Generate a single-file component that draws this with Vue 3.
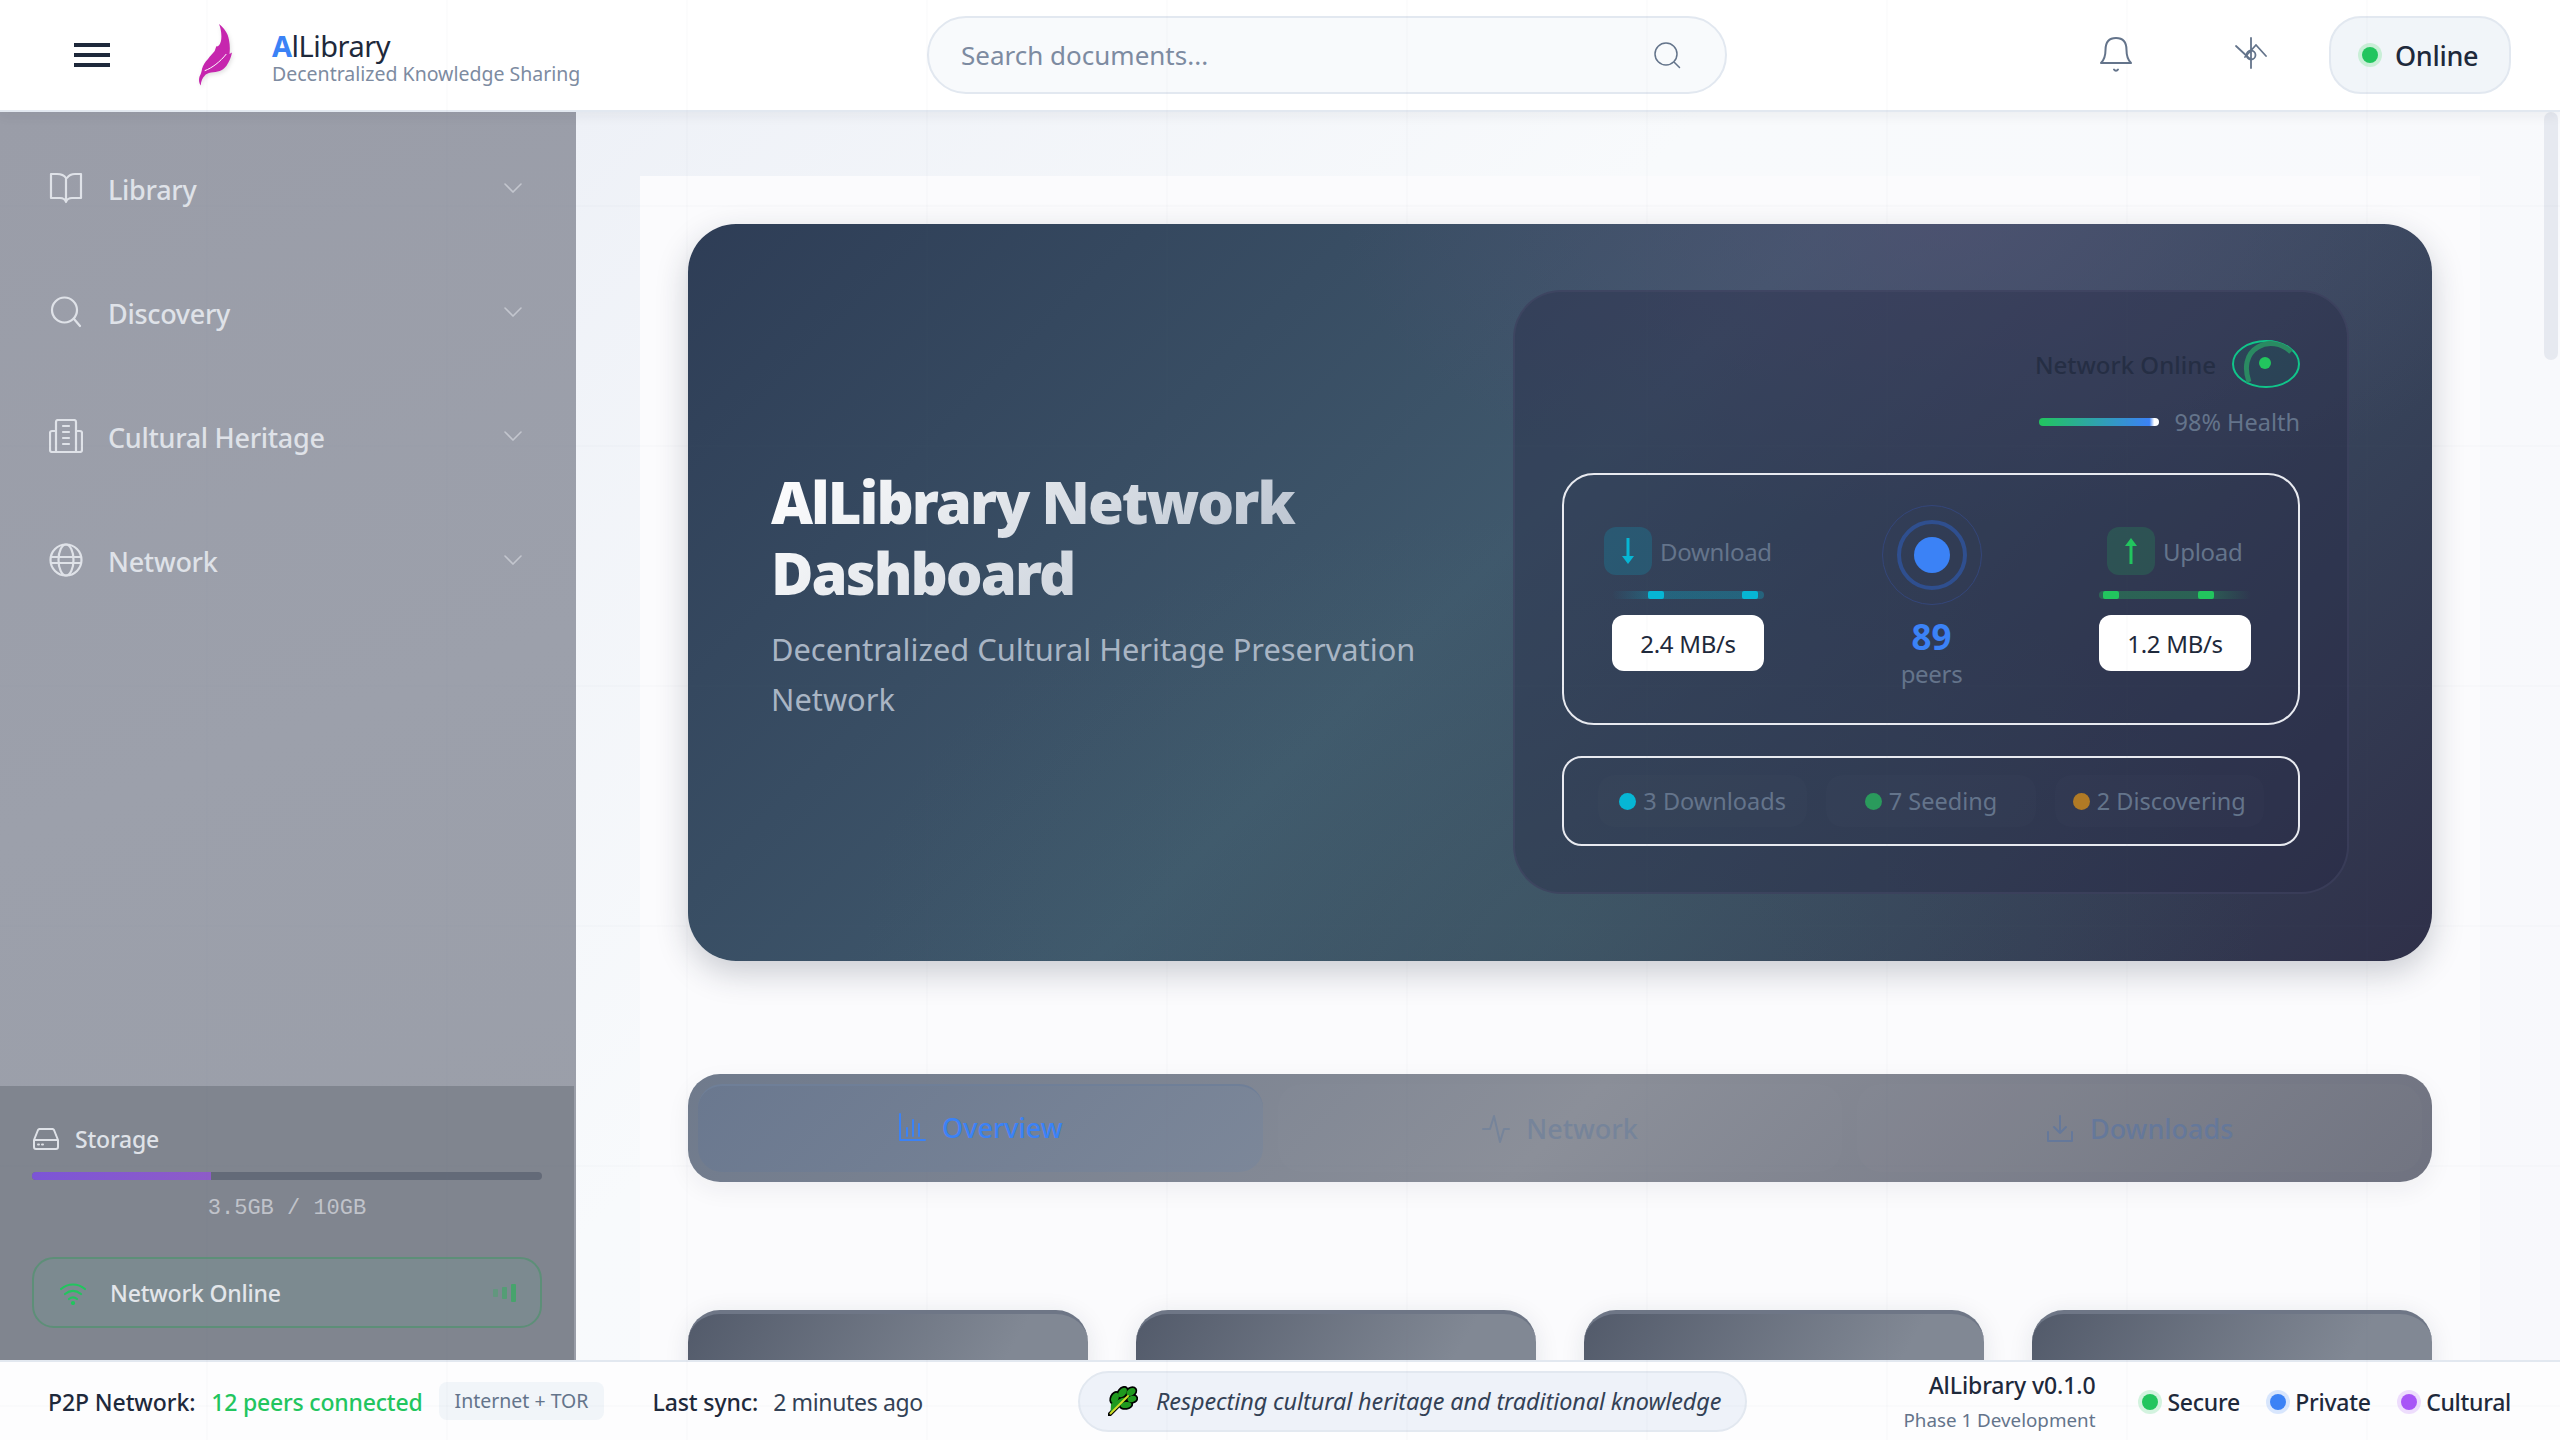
<script setup>
const navItems = [
  { label: 'Library', icon: 'book' },
  { label: 'Discovery', icon: 'search' },
  { label: 'Cultural Heritage', icon: 'building' },
  { label: 'Network', icon: 'globe' },
]
const tabs = [
  { label: 'Overview', icon: 'chart', cls: 'active' },
  { label: 'Network', icon: 'pulse', cls: 'net' },
  { label: 'Downloads', icon: 'download', cls: 'dls' },
]
const statuses = [
  { label: '3 Downloads', color: '#06b6d4' },
  { label: '7 Seeding', color: '#2a9a5c' },
  { label: '2 Discovering', color: '#b07a25' },
]
const badges = [
  { label: 'Secure', color: '#22c55e', halo: '#d3f3df' },
  { label: 'Private', color: '#3b82f6', halo: '#d8e6fd' },
  { label: 'Cultural', color: '#a855f7', halo: '#eeddfd' },
]
</script>

<template>
  <div class="app">
    <header class="header">
      <button class="burger"><span></span><span></span><span></span></button>
      <svg class="feather" viewBox="0 0 34 62" width="34" height="62">
        <path fill="#c626ae" d="M20 0 C25 4 29 9 30 16 C31 21 31 25 30.500 30 L33 28.500 C32 34 30 38 27.500 41.700 C25 45 23 46 20.700 47 C18 48 15 48 12 48.500 C9 49 7 50 5.700 51.700 C3.500 54 2 57 1.700 61.500 C0 59 -0.300 56 0.300 53.500 C1 51 2.300 50 3 45 C4 41 6 38 9 35 C11 32 14 29 15.700 27 L17.300 22.300 C19 23 21 21 22 17 C23 11 22 5 20 0 Z"/>
        <path fill="none" stroke="#fff" stroke-width="1" d="M5.700 46.700 C13 44 21 38 27.300 30"/>
      </svg>
      <div class="brand">
        <div class="brand-name"><b>A</b>lLibrary</div>
        <div class="brand-sub">Decentralized Knowledge Sharing</div>
      </div>
      <div class="search">
        <span class="search-text">Search documents...</span>
        <svg viewBox="0 0 30 30" width="30" height="30" fill="none" stroke="#64748b" stroke-width="1.500" stroke-linecap="round"><circle cx="14" cy="14" r="11"/><path d="M22.500 22.500l5 5"/></svg>
      </div>
      <div class="header-right">
        <svg class="bell" viewBox="0 0 34 38" width="34" height="38" fill="none" stroke="#64748b" stroke-width="2" stroke-linecap="round" stroke-linejoin="round">
          <path d="M2 27 C5 24 6.500 20 6.500 14 C6.500 6 10.500 2 17 2 C23.500 2 27.500 6 27.500 14 C27.500 20 29 24 32 27 Z"/>
          <path d="M15 33.500 C16 35 18 35 19 33.500"/>
        </svg>
        <svg class="odd" viewBox="0 0 32 32" width="32" height="32" fill="none" stroke="#64748b" stroke-width="1.800" stroke-linecap="round">
          <path d="M16 1v30M1 9l14 13M10 20L21 8l10 11"/>
          <circle cx="16" cy="18" r="4.500"/>
        </svg>
        <div class="online-pill"><i class="online-dot"></i><span>Online</span></div>
      </div>
    </header>

    <div class="middle">
      <aside class="sidebar">
        <nav class="nav">
          <div v-for="item in navItems" :key="item.label" class="nav-item">
            <svg class="nav-icon" viewBox="0 0 34 34" width="34" height="34" fill="none" stroke="#dfe2e8" stroke-width="2.200" stroke-linecap="round" stroke-linejoin="round">
              <template v-if="item.icon === 'book'">
                <path d="M17 7C15 4 12 3 8 3H2v24h9c3 0 5 1 6 4 1-3 3-4 6-4h9V3h-6c-4 0-6 1-8 4zM17 7v24"/>
              </template>
              <template v-else-if="item.icon === 'search'">
                <circle cx="15.500" cy="15" r="12.500"/><path d="M25 24l6 7"/>
              </template>
              <template v-else-if="item.icon === 'building'">
                <path d="M7 33V3a2 2 0 0 1 2-2h16a2 2 0 0 1 2 2v30zM7 12H3a2 2 0 0 0-2 2v17a2 2 0 0 0 2 2h28a2 2 0 0 0 2-2V14a2 2 0 0 0-2-2h-4M14 7h6M14 13h6M14 19h6M14 25h6"/>
              </template>
              <template v-else>
                <circle cx="17" cy="17" r="15.500"/><ellipse cx="17" cy="17" rx="7.500" ry="15.500"/><path d="M2 14h30M2 20h30"/>
              </template>
            </svg>
            <span class="nav-label">{{ item.label }}</span>
            <svg class="chev" viewBox="0 0 18 10" width="18" height="10" fill="none" stroke="#c3c6ce" stroke-width="1.600" stroke-linecap="round"><path d="M1 1l8 8 8-8"/></svg>
          </div>
        </nav>
        <div class="side-foot">
          <div class="storage-head">
            <svg viewBox="0 0 26 22" width="26" height="22" fill="none" stroke="#dfe2e8" stroke-width="2" stroke-linejoin="round"><path d="M1 12L5 2a2 2 0 0 1 2-1h12a2 2 0 0 1 2 1l4 10v7a2 2 0 0 1-2 2H3a2 2 0 0 1-2-2zM1 12h24"/><path d="M5 16.500h1M9 16.500h1" stroke-linecap="round"/></svg>
            <span>Storage</span>
          </div>
          <div class="storage-bar"><div class="storage-fill"></div></div>
          <div class="storage-text">3.5GB / 10GB</div>
          <div class="net-box">
            <svg viewBox="0 0 26 24" width="26" height="24" fill="none" stroke="#22c55e" stroke-width="2.200" stroke-linecap="round"><path d="M1 8c7-6 17-6 24 0M5 13c5-4 11-4 16 0M9 18c2.500-2 5.500-2 8 0"/><circle cx="13" cy="22" r="1" fill="#22c55e"/></svg>
            <span class="net-label">Network Online</span>
            <div class="net-bars"><i class="b1"></i><i class="b2"></i><i class="b3"></i></div>
          </div>
        </div>
      </aside>

      <main class="main">
        <div class="scroll-thumb"></div>
        <div class="sheet">
          <section class="hero">
            <div class="hero-text">
              <h1>AlLibrary Network Dashboard</h1>
              <p>Decentralized Cultural Heritage Preservation Network</p>
            </div>
            <div class="panel">
              <div class="health-head">
                <span class="health-name">Network Online</span>
                <svg class="ring" viewBox="0 0 68 48" width="68" height="48">
                  <ellipse cx="34" cy="24" rx="33" ry="23" fill="rgba(20,100,95,.22)" stroke="#10c58a" stroke-width="2"/>
                  <path d="M17 42C12 28 14 14 26 7C36 1 50 3 59 12" fill="none" stroke="#2a8a62" stroke-width="5"/>
                  <circle cx="33" cy="23" r="6" fill="#22c55e"/>
                </svg>
              </div>
              <div class="health-row">
                <div class="health-bar"></div>
                <span>98% Health</span>
              </div>
              <div class="speed-box">
                <div class="speed dl">
                  <div class="speed-head">
                    <div class="speed-icon"><svg viewBox="0 0 12 28" width="12" height="28"><path fill="#06b6d4" d="M4.500 1h3v18H12l-6 8-6-8h4.500z"/></svg></div>
                    <span>Download</span>
                  </div>
                  <div class="speed-track"><i class="s1"></i><i class="s2"></i></div>
                  <div class="speed-val">2.4 MB/s</div>
                </div>
                <div class="peers">
                  <div class="radar"><i class="r3"></i><i class="r2"></i><i class="r1"></i></div>
                  <div class="peer-num">89</div>
                  <div class="peer-label">peers</div>
                </div>
                <div class="speed ul">
                  <div class="speed-head">
                    <div class="speed-icon"><svg viewBox="0 0 12 28" width="12" height="28"><path fill="#22c55e" d="M4.500 27h3V9H12L6 1 0 9h4.500z"/></svg></div>
                    <span>Upload</span>
                  </div>
                  <div class="speed-track"><i class="s1"></i><i class="s2"></i></div>
                  <div class="speed-val">1.2 MB/s</div>
                </div>
              </div>
              <div class="status-box">
                <div v-for="s in statuses" :key="s.label" class="status-item">
                  <i :style="{ background: s.color }"></i><span>{{ s.label }}</span>
                </div>
              </div>
            </div>
          </section>

          <div class="tabs">
            <div v-for="t in tabs" :key="t.label" class="tab" :class="t.cls">
              <svg viewBox="0 0 28 30" width="28" height="30" fill="none" stroke="currentColor" stroke-width="2" stroke-linecap="round" stroke-linejoin="round">
                <path v-if="t.icon === 'chart'" d="M2 2v26h25M9 24v-8M15 24V8M21 24v-12"/>
                <path v-else-if="t.icon === 'pulse'" d="M1 15h7l4-13 6 26 4-13h5"/>
                <path v-else d="M14 2v17M8 13l6 6 6-6M2 18v9h24v-9"/>
              </svg>
              <span>{{ t.label }}</span>
            </div>
          </div>

          <div class="cards">
            <div v-for="n in 4" :key="n" class="card"></div>
          </div>
        </div>
      </main>
    </div>

    <footer class="footer">
      <div class="foot-left">
        <b>P2P Network:</b>
        <span class="peers-ok">12 peers connected</span>
        <span class="chip">Internet + TOR</span>
        <b class="sync">Last sync:</b>
        <span class="ago">2 minutes ago</span>
      </div>
      <div class="quote">
        <svg viewBox="0 0 30 30" width="30" height="30">
          <g stroke="#000" stroke-width="3.500" fill="#000" stroke-linecap="round">
            <ellipse cx="23" cy="6" rx="5" ry="3.500" transform="rotate(-35 23 6)"/>
            <ellipse cx="14.500" cy="6.500" rx="5.500" ry="3.500" transform="rotate(-50 14.500 6.500)"/>
            <ellipse cx="7" cy="12" rx="5.500" ry="3.500" transform="rotate(-65 7 12)"/>
            <ellipse cx="24" cy="13" rx="4.500" ry="3" transform="rotate(-15 24 13)"/>
            <ellipse cx="18" cy="19" rx="5.500" ry="3" transform="rotate(-10 18 19)"/>
            <path d="M1.500 28.500L22 8" stroke-width="4"/>
          </g>
          <g fill="#1f9a1f">
            <ellipse cx="23" cy="6" rx="5" ry="3.500" transform="rotate(-35 23 6)"/>
            <ellipse cx="14.500" cy="6.500" rx="5.500" ry="3.500" transform="rotate(-50 14.500 6.500)"/>
            <ellipse cx="7" cy="12" rx="5.500" ry="3.500" transform="rotate(-65 7 12)"/>
            <ellipse cx="24" cy="13" rx="4.500" ry="3" transform="rotate(-15 24 13)"/>
            <ellipse cx="18" cy="19" rx="5.500" ry="3" transform="rotate(-10 18 19)"/>
          </g>
          <path d="M3 18L6 16 14 12 20 11 12 20 7 24 2.500 27z" fill="#1f9a1f"/>
          <path d="M2.500 27.500L20 10" fill="none" stroke="#cfdc2a" stroke-width="2" stroke-linecap="round"/>
        </svg>
        <em>Respecting cultural heritage and traditional knowledge</em>
      </div>
      <div class="foot-right">
        <div class="version">
          <b>AlLibrary v0.1.0</b>
          <span>Phase 1 Development</span>
        </div>
        <div v-for="b in badges" :key="b.label" class="badge">
          <i :style="{ background: b.color, boxShadow: '0 0 0 4px ' + b.halo }"></i>
          <span>{{ b.label }}</span>
        </div>
      </div>
    </footer>
  </div>
</template>

<style>
html, body { margin: 0; background: #f8fafc; }
</style>

<style scoped>
.app {
  width: 2560px;
  height: 1440px;
  display: flex;
  flex-direction: column;
  overflow: hidden;
  position: relative;
  font-family: "Noto Sans", "Open Sans", sans-serif;
  color: #1e293b;
}
.app::after {
  content: "";
  position: absolute;
  inset: 0;
  z-index: 5;
  pointer-events: none;
  background-image:
    linear-gradient(90deg, rgba(90, 105, 130, .02) 2px, transparent 2px),
    linear-gradient(rgba(90, 105, 130, .02) 2px, transparent 2px);
  background-size: 240px 240px;
  background-position: 206px 205px;
}
.header {
  height: 112px;
  box-sizing: border-box;
  flex: none;
  display: flex;
  align-items: center;
  background: #fff;
  border-bottom: 2px solid #e2e8f0;
  position: relative;
  z-index: 3;
  box-shadow: 0 4px 12px rgba(30, 41, 59, .06);
}
.burger {
  all: unset;
  margin-left: 74px;
  width: 36px;
  display: flex;
  flex-direction: column;
  gap: 5.500px;
}
.burger span { height: 4.500px; background: #1e293b; }
.feather { margin-left: 89px; filter: drop-shadow(1px 2px 2px rgba(0, 0, 0, .12)); }
.brand { margin-left: 39px; width: 655px; flex: none; padding-top: 6px; }
.brand-name { font-size: 29px; line-height: 30px; letter-spacing: -.5px; }
.brand-name b { color: #3b82f6; font-weight: 700; }
.brand-sub { font-size: 19.500px; line-height: 22px; color: #7d8ba1; margin-top: 2px; }
.search {
  width: 800px;
  height: 78px;
  box-sizing: border-box;
  flex: none;
  border: 2px solid #e2e8f0;
  background: #f8fafc;
  border-radius: 39px;
  display: flex;
  align-items: center;
  justify-content: space-between;
  padding: 0 43px 0 32px;
  font-size: 26px;
  color: #7d8ba1;
}
.header-right { flex: 1; display: flex; align-items: center; padding-right: 49px; min-width: 0; }
.bell { margin-left: 372px; }
.odd { margin-left: 102px; margin-bottom: 4px; }
.online-pill {
  margin-left: 62px;
  width: 182px;
  height: 78px;
  box-sizing: border-box;
  border: 2px solid #e2e8f0;
  background: #f1f5f9;
  border-radius: 32px;
  display: flex;
  align-items: center;
  gap: 17px;
  padding-left: 31px;
  font-size: 27px;
  letter-spacing: -.3px;
  font-weight: 500;
}
.online-dot { width: 16px; height: 16px; border-radius: 50%; background: #22c55e; box-shadow: 0 0 0 4px #c9efd7; flex: none; }

.middle { flex: 1; min-height: 0; display: flex; }
.sidebar {
  width: 576px;
  flex: none;
  display: flex;
  flex-direction: column;
  background: linear-gradient(160deg, #9a9da8, #9ca0ab 50%, #9a9ea8);
  color: #dfe2e8;
}
.nav { padding-top: 14px; flex: 1; }
.nav-item { height: 124px; display: flex; align-items: center; padding: 0 48px 0 49px; }
.nav-label { margin-left: 25px; flex: 1; font-size: 27px; letter-spacing: -.3px; font-weight: 500; padding-top: 2px; }
.chev { margin-right: 6px; }
.nav-icon { flex: none; }
.side-foot {
  height: 274px;
  box-sizing: border-box;
  flex: none;
  padding: 40px 32px 0;
  background: #80858f;
  border-right: 2px solid #9a9ea8;
}
.storage-head { display: flex; align-items: center; gap: 16px; font-size: 23px; letter-spacing: -.2px; font-weight: 500; height: 26px; padding-left: 1px; }
.storage-bar { margin-top: 20px; height: 8px; border-radius: 4px; background: #636a78; overflow: hidden; }
.storage-fill { width: 35%; height: 100%; background: linear-gradient(90deg, #7c55d6, #8e5cc8); }
.storage-text {
  margin-top: 16px;
  text-align: center;
  font-family: "Liberation Mono", monospace;
  font-size: 22px;
  line-height: 26px;
  color: #c0c3ca;
}
.net-box {
  margin-top: 35px;
  height: 71px;
  box-sizing: border-box;
  border: 2px solid #5d8f78;
  border-radius: 22px;
  background: #7c8a90;
  display: flex;
  align-items: center;
  padding: 0 24px 0 26px;
}
.net-label { margin-left: 24px; flex: 1; font-size: 23px; letter-spacing: -.2px; font-weight: 500; color: #e3e6ea; }
.net-bars { display: flex; align-items: center; gap: 4px; }
.net-bars i { width: 5px; background: #47a36c; border-radius: 1px; }
.b1 { height: 8px; opacity: .5; }
.b2 { height: 12px; opacity: .75; }
.b3 { height: 18px; }

.main {
  flex: 1;
  min-width: 0;
  position: relative;
  overflow: hidden;
  padding: 64px 80px 0 64px;
  background: linear-gradient(135deg, #eef1f7, #f8fafc 35%, #f8f8fc);
}
.scroll-thumb { position: absolute; right: 2px; top: 0; width: 14px; height: 248px; border-radius: 7px; background: #e6e9f0; }
.sheet { background: #fbfbfd; padding: 48px 48px 0; min-height: 100%; box-sizing: border-box; }
.hero {
  height: 737px;
  box-sizing: border-box;
  border-radius: 48px;
  padding: 66px 83px 67px;
  display: flex;
  justify-content: space-between;
  align-items: stretch;
  background:
    radial-gradient(ellipse 700px 420px at 50% 96%, rgba(72, 108, 112, .32), transparent),
    radial-gradient(ellipse 600px 300px at 72% 0%, rgba(84, 80, 116, .6), transparent),
    linear-gradient(135deg, #2e3d56, #3f586c 46%, #2f3049);
  box-shadow: 0 12px 32px rgba(30, 41, 59, .22);
}
.hero-text { width: 660px; display: flex; flex-direction: column; justify-content: center; padding-top: 6px; }
.hero-text h1 {
  margin: 0;
  font-size: 58px;
  line-height: 71px;
  font-weight: 900;
  letter-spacing: -2px;
  background: linear-gradient(135deg, #fff, #a6b2c2);
  -webkit-background-clip: text;
  background-clip: text;
  color: transparent;
}
.hero-text p { margin: 16px 0 0; font-size: 30.800px; line-height: 50px; color: #a9b5c4; }
.panel {
  width: 836px;
  box-sizing: border-box;
  flex: none;
  border-radius: 48px;
  padding: 48px 47px 0 47px;
  background: rgba(38, 40, 68, .42);
  border: 2px solid rgba(70, 74, 104, .5);
}
.health-head { display: flex; justify-content: flex-end; align-items: center; gap: 16px; height: 48px; }
.health-name { font-size: 24px; font-weight: 500; color: #252e44; }
.ring { flex: none; }
.health-row { display: flex; justify-content: flex-end; align-items: center; gap: 16px; margin-top: 16px; font-size: 23.500px; color: #64748b; height: 36px; }
.health-bar {
  width: 120px;
  height: 8px;
  border-radius: 4px;
  background: linear-gradient(90deg, #22c55e, #3b82f6 92%, #fff 96%);
}
.speed-box {
  margin-top: 33px;
  height: 252px;
  box-sizing: border-box;
  border: 2px solid #e8eaf0;
  border-radius: 32px;
  padding: 52px 47px 0 48px;
  display: flex;
  justify-content: space-between;
}
.speed { width: 152px; }
.speed-head { display: flex; align-items: center; gap: 8px; font-size: 24px; color: #64748b; white-space: nowrap; height: 48px; margin-left: -8px; }
.speed.ul .speed-head { margin-left: 8px; }
.speed-head span { letter-spacing: -.3px; }
.speed-icon { width: 48px; height: 48px; border-radius: 12px; display: flex; align-items: center; justify-content: center; flex: none; }
.dl .speed-icon { background: rgba(6, 182, 212, .2); }
.ul .speed-icon { background: rgba(34, 197, 94, .18); }
.speed-track { position: relative; height: 8px; margin-top: 16px; border-radius: 4px; }
.dl .speed-track { background: linear-gradient(90deg, transparent, rgba(6, 182, 212, .3) 30%, rgba(6, 182, 212, .3)); }
.ul .speed-track { background: linear-gradient(90deg, rgba(34, 197, 94, .3), rgba(34, 197, 94, .3) 70%, transparent); }
.speed-track i { position: absolute; top: 0; height: 8px; width: 16px; border-radius: 2px; }
.dl .speed-track i { background: #06b6d4; }
.ul .speed-track i { background: #22c55e; }
.dl .s1 { left: 36px; }
.dl .s2 { left: 130px; }
.ul .s1 { left: 4px; }
.ul .s2 { left: 99px; }
.speed-val {
  margin-top: 16px;
  height: 56px;
  border-radius: 12px;
  background: #fff;
  display: flex;
  align-items: center;
  justify-content: center;
  font-size: 24px;
  letter-spacing: -.3px;
  color: #1e293b;
}
.peers { width: 160px; display: flex; flex-direction: column; align-items: center; margin-top: -22px; }
.radar { position: relative; width: 100px; height: 100px; flex: none; }
.radar i { position: absolute; border-radius: 50%; box-sizing: border-box; }
.r3 { inset: 0; border: 1px solid #34467a; }
.r2 { inset: 15px; border: 4px solid #2f4f8f; }
.r1 { inset: 32px; background: #3b82f6; }
.peer-num { margin-top: 8px; font-size: 35px; line-height: 48px; font-weight: 700; color: #3b82f6; }
.peer-label { font-size: 24px; line-height: 26px; letter-spacing: -.3px; color: #64748b; }
.status-box {
  margin-top: 31px;
  height: 90px;
  box-sizing: border-box;
  border: 2px solid #e8eaf0;
  border-radius: 20px;
  display: flex;
  align-items: center;
  gap: 19px;
  padding: 0 34px;
  font-size: 23.500px;
  color: #64748b;
}
.status-item {
  flex: 1;
  height: 52px;
  border-radius: 16px;
  background: rgba(255, 255, 255, .012);
  display: flex;
  align-items: center;
  justify-content: center;
  gap: 7px;
  white-space: nowrap;
}
.status-item i { width: 17px; height: 17px; border-radius: 50%; flex: none; }
.tabs {
  margin-top: 113px;
  height: 108px;
  box-sizing: border-box;
  border-radius: 32px;
  padding: 10px 10px 0;
  display: flex;
  gap: 15px;
  background: linear-gradient(135deg, #6f7a8c, #8a8e98 50%, #6f7280);
  box-shadow: 0 8px 24px rgba(30, 41, 59, .06);
}
.tab {
  flex: 1;
  height: 88px;
  box-sizing: border-box;
  border-radius: 24px;
  display: flex;
  align-items: center;
  justify-content: center;
  gap: 16px;
  padding-top: 1px;
  font-size: 27px;
  font-weight: 500;
  background: rgba(255, 255, 255, .015);
}
.tab.net { color: #76849a; }
.tab.dls { color: #65789a; }
.tab.active {
  padding-top: 0;
  padding-bottom: 4px;
  color: #3b82f6;
  background: linear-gradient(135deg, #6a788f, #7c8799);
  border-top: 2px solid #6f7f98;
}
.cards { margin-top: 128px; display: grid; grid-template-columns: repeat(4, 1fr); gap: 48px; }
.card {
  height: 300px;
  border-radius: 32px;
  background: linear-gradient(120deg, #525a6a, #818894 60%);
  border-top: 4px solid #6e7686;
  box-shadow: 0 4px 24px rgba(30, 41, 59, .1);
}

.footer {
  height: 80px;
  flex: none;
  box-sizing: border-box;
  border-top: 2px solid #e2e8f0;
  background: #fdfdfe;
  position: relative;
  z-index: 3;
  font-size: 23px;
  letter-spacing: -.1px;
  display: flex;
  align-items: center;
  padding: 2px 49px 0 48px;
}
.footer b { font-weight: 500; }
.foot-left { display: flex; align-items: center; white-space: nowrap; width: 1030px; flex: none; }
.peers-ok { color: #22c55e; font-weight: 500; margin-left: 16px; letter-spacing: -.2px; }
.chip { margin-left: 16px; background: #f1f5f9; border-radius: 8px; height: 38px; padding: 0 16px; display: flex; align-items: center; font-size: 19.500px; letter-spacing: 0; color: #64748b; margin-top: -3px; }
.sync { margin-left: 48px; }
.ago { margin-left: 15px; color: #334155; letter-spacing: -.35px; }
.quote {
  width: 669px;
  height: 61px;
  box-sizing: border-box;
  flex: none;
  border: 2px solid #e2e8f0;
  background: #eef2f9;
  border-radius: 31px;
  display: flex;
  align-items: center;
  gap: 18px;
  padding-left: 28px;
  white-space: nowrap;
  color: #334155;
  font-size: 23.450px;
  margin-top: -2px;
}
.foot-right { flex: 1; display: flex; align-items: center; justify-content: flex-end; white-space: nowrap; }
.version { display: flex; flex-direction: column; align-items: flex-end; margin-right: 47px; line-height: 30px; margin-top: -2px; }
.version span { font-size: 18.800px; letter-spacing: 0; color: #64748b; margin-top: 7px; line-height: 26px; }
.badge { display: flex; align-items: center; gap: 9px; margin-right: 30.500px; letter-spacing: -.28px; }
.badge:last-child { margin-right: 0; }
.badge i { width: 16px; height: 16px; border-radius: 50%; }
.badge span { font-weight: 500; }
</style>
